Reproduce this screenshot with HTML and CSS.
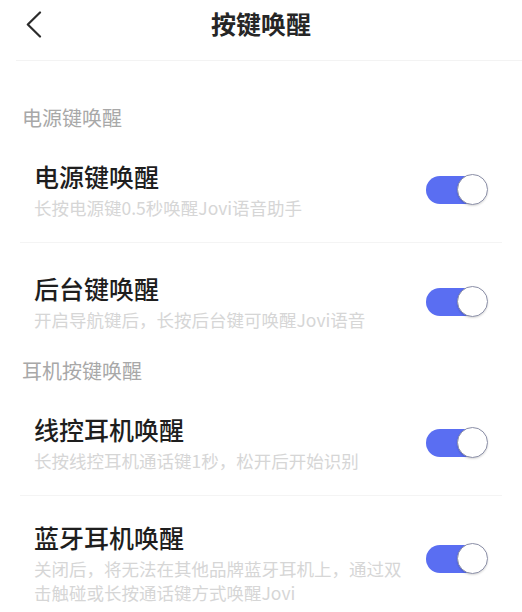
FILE: index.html
```html
<html lang="zh-CN">
<head>
  <meta charset="UTF-8" />
  <title>按键唤醒</title>
  <link rel="stylesheet" href="styles.css">
</head>

<body>
  <header class="topbar">
    <svg class="back" width="16" height="28" viewBox="0 0 16 28">
      <polyline points="14,1.5 1.8,13.5 14,25.5" fill="none" stroke="#2b2b2b" stroke-width="2.2" stroke-linecap="round" stroke-linejoin="round"/>
    </svg>
    <h1 class="title">按键唤醒</h1>
  </header>

  <!-- 电源键 -->
  <div class="group-label">电源键唤醒</div>

  <div class="item line">
    <div class="text">
      <div class="name">电源键唤醒</div>
      <div class="desc">长按电源键0.5秒唤醒Jovi语音助手</div>
    </div>
    <span class="switch on"><span class="knob"></span></span>
  </div>

  <div class="item">
    <div class="text">
      <div class="name">后台键唤醒</div>
      <div class="desc">开启导航键后，长按后台键可唤醒Jovi语音</div>
    </div>
    <span class="switch on"><span class="knob"></span></span>
  </div>

  <!-- 耳机 -->
  <div class="group-label">耳机按键唤醒</div>

  <div class="item line">
    <div class="text">
      <div class="name">线控耳机唤醒</div>
      <div class="desc">长按线控耳机通话键1秒，松开后开始识别</div>
    </div>
    <span class="switch on"><span class="knob"></span></span>
  </div>

  <div class="item last">
    <div class="text">
      <div class="name">蓝牙耳机唤醒</div>
      <div class="desc">关闭后，将无法在其他品牌蓝牙耳机上，通过双击触碰或长按通话键方式唤醒Jovi</div>
    </div>
    <span class="switch on"><span class="knob"></span></span>
  </div>
</body>
</html>
```

FILE: styles.css
```css
body {
  margin: 0;
  background: #fff;
  font-family: "Noto Sans CJK SC", "Noto Sans", sans-serif;
  overflow: hidden;
}

.topbar {
  position: relative;
  box-sizing: border-box;
  height: 61px;
  margin-left: 16px;
  padding-top: 7px;
  border-bottom: 1px solid #f3f3f3;
  display: flex;
  justify-content: center;
  align-items: flex-start;
  margin-bottom: 40px;
}

.back {
  position: absolute;
  left: 10px;
  top: 11px;
}

.title {
  margin: 0 0 0 -16px;
  font-size: 25px;
  font-weight: bold;
  color: #262626;
  line-height: 32px;
}

.group-label {
  padding: 4px 22px 0;
  font-size: 20px;
  line-height: 26px;
  color: #a8a8a8;
}

.item {
  margin: 0 20px;
  padding: 29px 14px 22px;
  display: flex;
  align-items: center;
  justify-content: space-between;
}

.item.line {
  border-bottom: 1px solid #f4f4f4;
}

.item.last {
  padding-top: 25px;
}

.item.last .switch {
  margin-bottom: 8px;
}

.text {
  max-width: 372px;
}

.name {
  font-size: 25px;
  font-weight: 500;
  line-height: 32px;
  color: #1e1e1e;
}

.desc {
  margin-top: 4px;
  font-size: 17.5px;
  line-height: 24px;
  color: #d6d6d6;
}

.switch {
  position: relative;
  flex: none;
  width: 62px;
  height: 32px;
}

.switch::before {
  content: "";
  position: absolute;
  left: 0;
  top: 2px;
  width: 56px;
  height: 28px;
  border-radius: 14px;
  background: #dcdcdc;
}

.switch.on::before {
  background: #5a6ef2;
}

.knob {
  position: absolute;
  right: 0;
  top: 0;
  width: 29px;
  height: 29px;
  border-radius: 50%;
  background: #fff;
  border: 1.5px solid #8c90a8;
  box-shadow: 0 1px 2px rgba(0, 0, 0, 0.15);
}
```
